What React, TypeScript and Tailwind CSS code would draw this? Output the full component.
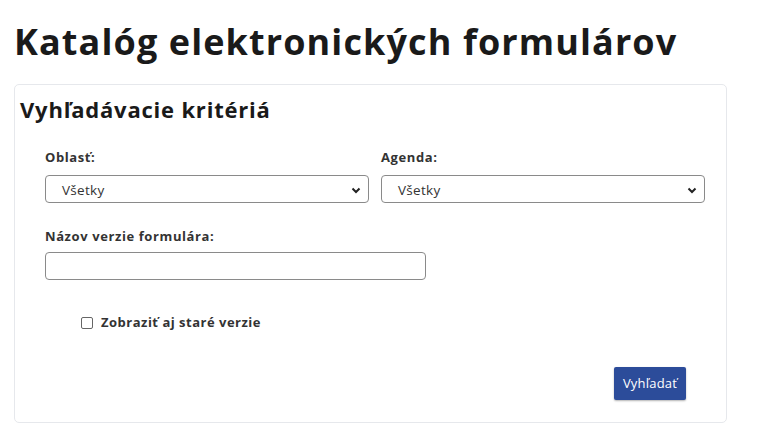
import React from "react";

function Chevron() {
  return (
    <svg width="10" height="7" viewBox="0 0 10 7" className="absolute right-[7px] top-[11px]">
      <path d="M1.5 1.5 L5 5 L8.5 1.5" fill="none" stroke="#222" strokeWidth="2" />
    </svg>
  );
}

function Select() {
  return (
    <div className="relative h-[28px] rounded-[4px] border border-[#8a8a8a] bg-white">
      <span className="absolute left-[16px] top-[4px] text-[13.5px] tracking-[0.3px] text-[#333]">Všetky</span>
      <Chevron />
    </div>
  );
}

export default function App() {
  return (
    <div className="min-h-[429px] w-[766px] bg-white font-['Open_Sans',sans-serif] text-[#1f1f1f]">
      <h1 className="pl-[14px] pt-[18px] text-[36px] font-bold leading-[48px] tracking-[1.1px] text-[#1a1a1a]">
        Katalóg elektronických formulárov
      </h1>
      <div className="ml-[14px] mt-[18px] h-[339px] w-[713px] rounded-[5px] border border-[#e6e8ec]">
        <h2 className="pl-[5px] pt-[9px] text-[22px] font-bold leading-[30px] tracking-[0.8px] text-[#1a1a1a]">
          Vyhľadávacie kritériá
        </h2>
        <div className="pl-[30px] pr-[21px] pt-[24px]">
          <div className="flex gap-[12px]">
            <div className="w-[324px]">
              <div className="mb-[8px] text-[13px] font-bold leading-[19px] tracking-[0.6px] text-[#333]">Oblasť:</div>
              <Select />
            </div>
            <div className="w-[324px]">
              <div className="mb-[8px] text-[13px] font-bold leading-[19px] tracking-[0.6px] text-[#333]">Agenda:</div>
              <Select />
            </div>
          </div>
          <div className="mt-[24px] mb-[6px] text-[13px] font-bold leading-[19px] tracking-[0.6px] text-[#333]">Názov verzie formulára:</div>
          <div className="h-[28px] w-[381px] rounded-[4px] border border-[#8a8a8a] bg-white" />
          <label className="ml-[36px] mt-[33px] flex h-[19px] items-center gap-[8px]">
            <span className="h-[12px] w-[12px] rounded-[2px] border border-[#666] bg-white" />
            <span className="text-[13px] font-bold leading-[19px] tracking-[0.5px] text-[#333]">Zobraziť aj staré verzie</span>
          </label>
          <div className="mt-[35px] flex justify-end pr-[19px]">
            <button className="h-[33px] w-[72px] rounded-[2px] bg-[#2c4c9a] text-[13px] tracking-[0.2px] text-white shadow-[0_1px_2px_rgba(0,0,0,0.3)]">
              Vyhľadať
            </button>
          </div>
        </div>
      </div>
    </div>
  );
}
